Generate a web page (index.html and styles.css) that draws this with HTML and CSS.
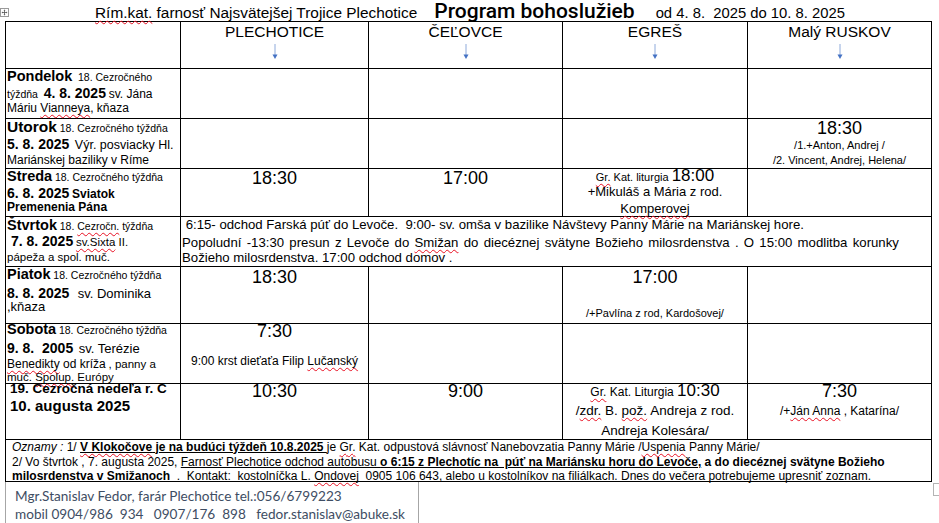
FILE: index.html
```html
<!DOCTYPE html>
<html lang="sk">
<head>
<meta charset="utf-8">
<title>Program bohoslužieb</title>
<link rel="stylesheet" href="styles.css">
</head>
<body>
<div class="page">
  <span class="move-handle"><svg width="9" height="9" viewBox="0 0 9 9"><rect x="0.5" y="0.5" width="8" height="8" fill="#fff" stroke="#9a9a9a"/><path d="M4.5 2v5M2 4.5h5" stroke="#555" stroke-width="0.8"/><path d="M4.5 1.6l-1 1h2zM4.5 7.4l-1-1h2zM1.6 4.5l1-1v2zM7.4 4.5l-1-1v2z" fill="#555"/></svg></span>

  <div class="title">
    <span class="t-parish"><span class="sp">Rím.kat.</span> farnosť Najsvätejšej Trojice Plechotice</span>
    <span class="t-main">Program bohoslužieb</span>
    <span class="t-dates">od 4. 8.&nbsp; 2025 do 10. 8. 2025</span>
  </div>

  <table class="sched">
    <colgroup>
      <col class="c-lab"><col class="c-p"><col class="c-c"><col class="c-e"><col class="c-r">
    </colgroup>
    <tr class="r-head">
      <td></td>
      <td class="loc">PLECHOTICE<svg class="arr" width="8" height="16" viewBox="0 0 8 16"><path d="M4 0v12" stroke="#8eaadb" stroke-width="1"/><path d="M1.5 10.5h5L4 15z" fill="#4472c4"/></svg></td>
      <td class="loc">ČEĽOVCE<svg class="arr" width="8" height="16" viewBox="0 0 8 16"><path d="M4 0v12" stroke="#8eaadb" stroke-width="1"/><path d="M1.5 10.5h5L4 15z" fill="#4472c4"/></svg></td>
      <td class="loc">EGREŠ<svg class="arr" width="8" height="16" viewBox="0 0 8 16"><path d="M4 0v12" stroke="#8eaadb" stroke-width="1"/><path d="M1.5 10.5h5L4 15z" fill="#4472c4"/></svg></td>
      <td class="loc">Malý RUSKOV<svg class="arr" width="8" height="16" viewBox="0 0 8 16"><path d="M4 0v12" stroke="#8eaadb" stroke-width="1"/><path d="M1.5 10.5h5L4 15z" fill="#4472c4"/></svg></td>
    </tr>

    <tr class="r-mon">
      <td class="lab">
        <div class="ln"><span class="day">Pondelok</span> <span class="wk">&nbsp;18. Cezročného</span></div>
        <div class="ln"><span class="wk">týždňa&nbsp;</span> <span class="dt">4. 8. 2025</span> <span class="ds">sv. Jána</span></div>
        <div class="ln"><span class="ds">Máriu <span class="sp">Vianneya</span>, kňaza</span></div>
      </td>
      <td></td><td></td><td></td><td></td>
    </tr>

    <tr class="r-tue">
      <td class="lab">
        <div class="ln"><span class="day big">Utorok</span> <span class="wk">18. Cezročného týždňa</span></div>
        <div class="ln"><span class="dt">5. 8. 2025</span>&nbsp; <span class="ds md">Výr. posviacky Hl.</span></div>
        <div class="ln"><span class="ds">Mariánskej baziliky v Ríme</span></div>
      </td>
      <td></td><td></td><td></td>
      <td class="mass">
        <div class="ln"><span class="time">18:30</span></div>
        <div class="ln"><span class="note">/1.+Anton, Andrej /</span></div>
        <div class="ln"><span class="note">/2. Vincent, Andrej, Helena/</span></div>
      </td>
    </tr>

    <tr class="r-wed">
      <td class="lab">
        <div class="ln"><span class="day">Streda</span> <span class="wk">18. Cezročného týždňa</span></div>
        <div class="ln"><span class="dt">6. 8. 2025</span> <span class="ds b">Sviatok</span></div>
        <div class="ln"><span class="ds b">Premenenia Pána</span></div>
      </td>
      <td class="mass"><div class="ln"><span class="time">18:30</span></div></td>
      <td class="mass"><div class="ln"><span class="time">17:00</span></div></td>
      <td class="mass egres-wed">
        <div class="ln"><span class="note"><span class="sp">Gr.</span> Kat. liturgia </span><span class="time-in">18:00</span></div>
        <div class="ln"><span class="mtxt">+Mikuláš a Mária z rod.</span></div>
        <div class="ln"><span class="mtxt"><span class="sp">Komperovej</span></span></div>
      </td>
      <td></td>
    </tr>

    <tr class="r-thu">
      <td class="lab">
        <div class="ln"><span class="day">Štvrtok</span> <span class="wk">18. <span class="sp">Cezročn.</span> týždňa</span></div>
        <div class="ln"><span class="dt">&nbsp;7. 8. 2025</span> <span class="ds sm"><span class="sp">sv.Sixta</span> II.</span></div>
        <div class="ln"><span class="ds sm">pápeža a spol. muč.</span></div>
      </td>
      <td class="trip" colspan="4">
        <div class="ln"><span class="tt">&nbsp;6:15- odchod Farská púť do Levoče.&nbsp; 9:00- sv. omša v bazilike Návštevy Panny Márie na Mariánskej hore.</span></div>
        <div class="ln"><span class="tt wide">Popoludní -13:30 presun z Levoče do <span class="sp">Smižan</span> do diecéznej svätyne Božieho milosrdenstva . O 15:00 modlitba korunky</span></div>
        <div class="ln"><span class="tt">Božieho milosrdenstva. 17:00 odchod domov .</span></div>
      </td>
    </tr>

    <tr class="r-fri">
      <td class="lab">
        <div class="ln"><span class="day">Piatok</span> <span class="wk">18. Cezročného týždňa</span></div>
        <div class="ln"><span class="dt">8. 8. 2025</span>&nbsp;&nbsp; <span class="ds lg">sv. Dominika</span></div>
        <div class="ln"><span class="ds lg">,kňaza</span></div>
      </td>
      <td class="mass"><div class="ln"><span class="time">18:30</span></div></td>
      <td></td>
      <td class="mass">
        <div class="ln"><span class="time">17:00</span></div>
        <div class="ln"><span class="note">/+Pavlína z rod, Kardošovej/</span></div>
      </td>
      <td></td>
    </tr>

    <tr class="r-sat">
      <td class="lab">
        <div class="ln"><span class="day">Sobota</span> <span class="wk">18. Cezročného týždňa</span></div>
        <div class="ln"><span class="dt">9. 8.&nbsp; 2005</span>&nbsp; <span class="ds lg">sv. Terézie</span></div>
        <div class="ln"><span class="ds"><span class="sp">Benedikty</span> od kríža</span> <span class="ds sm">, panny a</span></div>
        <div class="ln"><span class="ds sm">muč. <span class="sp">Spolup.</span> Európy</span></div>
      </td>
      <td class="mass">
        <div class="ln"><span class="time">7:30</span></div>
        <div class="ln"><span class="bapt">9:00 krst dieťaťa Filip <span class="sp">Lučanský</span></span></div>
      </td>
      <td></td><td></td><td></td>
    </tr>

    <tr class="r-sun">
      <td class="lab sun">
        <div class="ln"><span class="sun1">19. Cezročná nedeľa r. C</span></div>
        <div class="ln"><span class="sun2">10. augusta 2025</span></div>
      </td>
      <td class="mass"><div class="ln"><span class="time">10:30</span></div></td>
      <td class="mass"><div class="ln"><span class="time">9:00</span></div></td>
      <td class="mass egres-sun">
        <div class="ln"><span class="note2"><span class="sp">Gr.</span> Kat. Liturgia </span><span class="time-in">10:30</span></div>
        <div class="ln"><span class="stxt">/<span class="sp">zdr.</span> B. <span class="sp">pož.</span> Andreja z rod.</span></div>
        <div class="ln"><span class="stxt">Andreja Kolesára/</span></div>
      </td>
      <td class="mass">
        <div class="ln"><span class="time">7:30</span></div>
        <div class="ln"><span class="note2">/+<span class="sp">Ján Anna</span> , Katarína/</span></div>
      </td>
    </tr>

    <tr class="r-news">
      <td class="news" colspan="5">
        <div class="ln"><span class="nt"><em>Oznamy :</em> 1/ <span class="bu"><span class="sp">V Klokočove</span> je na budúci týždeň 10.8.2025 </span>je <span class="sp">Gr.</span> Kat. odpustová slávnosť Nanebovzatia Panny Márie /<span class="sp">Uspenia</span> Panny Márie/</span></div>
        <div class="ln"><span class="nt">2/ Vo štvrtok , 7. augusta 2025, <span class="u">Farnosť Plechotice odchod autobusu <b>o 6:15 z Plechotíc na&nbsp; púť na Mariánsku horu do Levoče,</b></span><b> a do diecéznej svätyne Božieho</b></span></div>
        <div class="ln"><span class="nt"><b>milosrdenstva v Smižanoch</b>&nbsp; .&nbsp; Kontakt:&nbsp; kostolníčka L. <span class="sp">Ondovej</span>&nbsp; 0905 106 643, alebo u kostolníkov na filiálkach. Dnes do večera potrebujeme upresniť zoznam.</span></div>
      </td>
    </tr>
  </table>

  <div class="footer">
    <div>Mgr.Stanislav Fedor, farár Plechotice tel.:056/6799223</div>
    <div>mobil 0904/986&nbsp; 934&nbsp;&nbsp; 0907/176&nbsp; 898&nbsp;&nbsp; fedor.stanislav@abuke.sk</div>
  </div>

  <span class="resize-handle"></span>
</div>
</body>
</html>
```

FILE: styles.css
```css
html, body {
  margin: 0;
  padding: 0;
  background: #fff;
}

.page {
  position: relative;
  width: 939px;
  height: 523px;
  overflow: hidden;
  font-family: "Liberation Sans", Arial, sans-serif;
  color: #000;
}

.move-handle {
  position: absolute;
  left: 0;
  top: 8px;
  width: 9px;
  height: 9px;
  line-height: 0;
}

.resize-handle {
  position: absolute;
  left: 933px;
  top: 483px;
  width: 8px;
  height: 13px;
  border: 1px solid #b4b4b4;
  box-sizing: border-box;
  background: #fff;
}

.sp {
  text-decoration: underline wavy #e81123;
  text-decoration-thickness: 1px;
  text-underline-offset: 2px;
  text-decoration-skip-ink: none;
}

/* Title */
.title {
  height: 21px;
  display: flex;
  align-items: baseline;
  padding: 1px 0 0 95px;
  box-sizing: border-box;
  white-space: nowrap;
}
.t-parish {
  font-size: 15.4px;
  line-height: 20px;
}
.t-main {
  font-family: Roboto, "Liberation Sans", Arial, sans-serif;
  font-weight: 500;
  font-size: 21px;
  line-height: 20px;
  margin-left: 17px;
}
.t-dates {
  font-size: 14.8px;
  line-height: 20px;
  margin-left: 21px;
}

/* Table */
.sched {
  margin-left: 5px;
  width: 926px;
  border-collapse: collapse;
  table-layout: fixed;
}
.c-lab { width: 175px; }
.c-p { width: 188px; }
.c-c { width: 194px; }
.c-e { width: 185px; }
.c-r { width: 184px; }

.sched td {
  border: 1px solid #000;
  padding: 0 2px;
  vertical-align: top;
  box-sizing: border-box;
}

.r-head td { height: 47px; }
.r-mon td { height: 50px; }
.r-tue td { height: 50px; }
.r-wed td { height: 48px; }
.r-thu td { height: 50px; }
.r-fri td { height: 57px; }
.r-sat td { height: 60px; }
.r-sun td { height: 56px; }
.r-news td { height: 42px; }

.loc {
  text-align: center;
  font-size: 15.5px;
  line-height: 18px;
  padding-top: 1px !important;
}
.arr {
  display: block;
  margin: 3px auto 0;
}

/* Line boxes: a fixed 14px strut; the text inside does not grow it */
.ln {
  height: 14px;
  font-size: 10px;
  line-height: 14px;
  white-space: nowrap;
}
.ln:last-child { margin-bottom: -14px; }
.ln span,
.ln b,
.ln em {
  line-height: 0;
}

/* Day label cells */
.lab { padding-left: 1px !important; }
.day { font-weight: 700; font-size: 14.5px; }
.day.big { font-size: 15.5px; }
.wk { font-size: 10.5px; }
.dt { font-weight: 700; font-size: 14px; }
.ds { font-size: 12px; }
.ds.md { font-size: 12.5px; }
.ds.b { font-weight: 700; font-size: 12px; }
.ds.sm { font-size: 11.5px; }
.ds.lg { font-size: 13px; }

.r-mon .lab .ln:nth-child(1) { margin-top: 2px; }
.r-mon .lab .ln:nth-child(2) { margin-top: 3px; }
.r-mon .lab .ln:nth-child(3) { margin-top: 0; }

.r-tue .lab .ln:nth-child(1) { margin-top: 2.5px; }
.r-tue .lab .ln:nth-child(2) { margin-top: 3px; }
.r-tue .lab .ln:nth-child(3) { margin-top: 1px; }

.r-wed .lab .ln:nth-child(1) { margin-top: 1.5px; }
.r-wed .lab .ln:nth-child(2) { margin-top: 3px; }
.r-wed .lab .ln:nth-child(3) { margin-top: -1px; }

.r-thu .lab .ln:nth-child(1) { margin-top: 3px; }
.r-thu .lab .ln:nth-child(2) { margin-top: 2px; }
.r-thu .lab .ln:nth-child(3) { margin-top: 1px; }

.r-fri .lab .ln:nth-child(1) { margin-top: 1.5px; }
.r-fri .lab .ln:nth-child(2) { margin-top: 5px; }
.r-fri .lab .ln:nth-child(3) { margin-top: -1px; }

.r-sat .lab .ln:nth-child(1) { margin-top: 0; }
.r-sat .lab .ln:nth-child(2) { margin-top: 5px; }
.r-sat .lab .ln:nth-child(3) { margin-top: 1px; }
.r-sat .lab .ln:nth-child(4) { margin-top: -1.5px; }

.sun { padding-left: 4px !important; }
.sun1 { font-weight: 700; font-size: 13.5px; }
.sun2 { font-weight: 700; font-size: 15px; }
.r-sun .lab .ln:nth-child(1) { margin-top: -1px; }
.r-sun .lab .ln:nth-child(2) { margin-top: 4px; }

/* Mass cells */
.mass { text-align: center; }
.time { font-size: 18px; }
.time-in { font-size: 17px; }
.note { font-size: 11px; }
.note2 { font-size: 12px; }
.mtxt { font-size: 13px; }
.stxt { font-size: 13.5px; }
.bapt { font-size: 12px; }

.r-tue .mass .ln:nth-child(1) { margin-top: 4.5px; }
.r-tue .mass .ln:nth-child(2) { margin-top: 1px; }
.r-tue .mass .ln:nth-child(3) { margin-top: 1px; }

.r-wed .mass .ln:nth-child(1) { margin-top: 4.5px; }
.r-wed .egres-wed .ln:nth-child(1) { margin-top: 1.5px; }
.r-wed .egres-wed .ln:nth-child(2) { margin-top: 1px; }
.r-wed .egres-wed .ln:nth-child(3) { margin-top: 3px; }

.r-fri .mass .ln:nth-child(1) { margin-top: 5.5px; }
.r-fri .mass .ln:nth-child(2) { margin-top: 20px; }

.r-sat .mass .ln:nth-child(1) { margin-top: 2.5px; }
.r-sat .mass .ln:nth-child(2) { margin-top: 14px; }

.r-sun .mass .ln:nth-child(1) { margin-top: 2.5px; }
.r-sun .mass .ln:nth-child(2) { margin-top: 4px; }
.r-sun .egres-sun .ln:nth-child(1) { margin-top: 1.5px; }
.r-sun .egres-sun .ln:nth-child(2) { margin-top: 5px; }
.r-sun .egres-sun .ln:nth-child(3) { margin-top: 6px; }

/* Thursday trip */
.trip { padding: 0 1px !important; }
.tt { font-size: 13.2px; }
.tt.wide { word-spacing: 1.6px; }
.r-thu .trip .ln:nth-child(1) { margin-top: 2px; }
.r-thu .trip .ln:nth-child(2) { margin-top: 4px; }
.r-thu .trip .ln:nth-child(3) { margin-top: 1px; }

/* Announcements */
.news { padding: 0 0 0 6px !important; }
.nt { font-size: 12px; }
.r-news .ln:nth-child(1) { margin-top: 0.5px; }
.r-news .ln:nth-child(2) { margin-top: 1.5px; }
.r-news .ln:nth-child(3) { margin-top: -0.5px; }
.bu {
  font-weight: 700;
  text-decoration: underline;
}
.u { text-decoration: underline; }

/* Footer */
.footer {
  margin-left: 5px;
  width: 414px;
  height: 50px;
  border-left: 1px solid #a6a6a6;
  border-right: 1px solid #a6a6a6;
  box-sizing: border-box;
  padding: 5px 0 0 9px;
  font-family: Lato, "Open Sans", sans-serif;
  font-size: 13.6px;
  line-height: 18px;
  color: #3e4d63;
  white-space: nowrap;
}
```
